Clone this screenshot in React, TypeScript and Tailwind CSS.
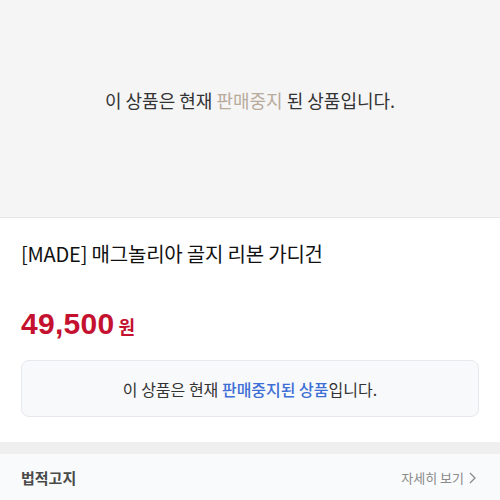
const font = { fontFamily: '"Noto Sans CJK KR", "Noto Sans", sans-serif' };

export default function App() {
  return (
    <div className="w-[500px] h-[500px] overflow-hidden bg-white" style={font}>
      {/* stopped-sale banner */}
      <div className="h-[218px] bg-[#f5f5f5] border-b border-[#e6e6e6] flex justify-center pt-[87px]">
        <p className="text-[18px] leading-[26px] text-[#333]">
          이 상품은 현재 <span className="text-[#b8ab9c]">판매중지</span> 된 상품입니다.
        </p>
      </div>

      <div className="px-[21px] pt-[22px] pb-[25px]">
        <h1 className="text-[20px] leading-[28px] text-[#111] tracking-[-0.2px]">
          [MADE] 매그놀리아 골지 리본 가디건
        </h1>
        <div className="mt-[39px] flex items-baseline gap-[4px]">
          <span
            className="text-[30px] leading-[34px] font-extrabold text-[#c4112f] tracking-[0.3px]"
            style={{ fontFamily: '"Liberation Sans", Arial, sans-serif' }}
          >
            49,500
          </span>
          <span className="text-[18px] font-bold text-[#c4112f]">원</span>
        </div>
        <div className="mt-[19px] h-[57px] rounded-[8px] border border-[#e5e8ed] bg-[#f8f9fb] flex items-center justify-center">
          <p className="text-[16px] text-[#333]">
            이 상품은 현재 <span className="text-[#3d6fd6] font-medium">판매중지된 상품</span>입니다.
          </p>
        </div>
      </div>

      <div className="h-[12px] bg-[#efefef]" />

      <div className="bg-[#f9fafb] px-[21px] h-[48px] flex items-center justify-between">
        <span className="text-[15px] font-semibold text-[#4a4a4a]">법적고지</span>
        <span className="text-[13px] text-[#8a8a8a] flex items-center gap-[4px] pr-[3px]">
          자세히 보기
          <svg width="8" height="12" viewBox="0 0 8 12" fill="none" stroke="#8a8a8a" strokeWidth="1.3">
            <path d="M2 1l5 5-5 5" />
          </svg>
        </span>
      </div>
    </div>
  );
}
